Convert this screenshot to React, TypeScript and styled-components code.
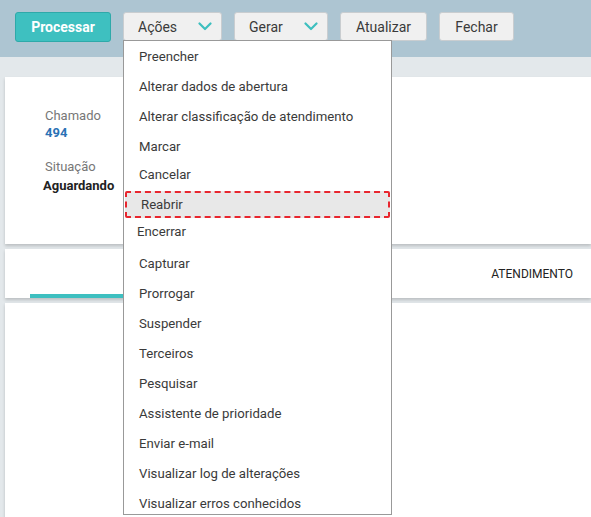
import React from 'react'
import styled, { createGlobalStyle } from 'styled-components'

const GlobalStyle = createGlobalStyle`
  html, body {
    margin: 0;
    padding: 0;
    background: #e3e8eb;
    font-family: Roboto, "Noto Sans", Arial, sans-serif;
    overflow: hidden;
  }
  * { box-sizing: border-box; }
`

type MenuItemT = {
  label: string
  h: number
  gap?: number
  active?: boolean
  indent?: number
  pb?: number
}

const menuItems: MenuItemT[] = [
  { label: 'Preencher', h: 30 },
  { label: 'Alterar dados de abertura', h: 30 },
  { label: 'Alterar classificação de atendimento', h: 30 },
  { label: 'Marcar', h: 30 },
  { label: 'Cancelar', h: 26 },
  { label: 'Reabrir', h: 27, gap: 4, active: true },
  { label: 'Encerrar', h: 30, indent: 12, pb: 4 },
  { label: 'Capturar', h: 30 },
  { label: 'Prorrogar', h: 30 },
  { label: 'Suspender', h: 30 },
  { label: 'Terceiros', h: 30 },
  { label: 'Pesquisar', h: 30 },
  { label: 'Assistente de prioridade', h: 30 },
  { label: 'Enviar e-mail', h: 30 },
  { label: 'Visualizar log de alterações', h: 30 },
  { label: 'Visualizar erros conhecidos', h: 30 },
]

const Chevron = () => (
  <svg width='14' height='9' viewBox='0 0 14 9' fill='none'>
    <path d='M1.5 1.5 L7 7 L12.5 1.5' stroke='#3dbfbf' strokeWidth='2.2' strokeLinecap='round' strokeLinejoin='round' />
  </svg>
)

const App: React.FC = () => {
  return (
    <>
      <GlobalStyle />
      <Page>
        <TopBar>
          <PrimaryButton>Processar</PrimaryButton>
          <MenuWrap>
            <SelectButton $w={99}>
              <span>Ações</span>
              <Chevron />
            </SelectButton>
            <Dropdown>
              {menuItems.map((item) => (
                <MenuItem
                  key={item.label}
                  $h={item.h}
                  $gap={item.gap ?? 0}
                  $active={!!item.active}
                  $indent={item.indent ?? 14}
                  $pb={item.pb ?? 0}
                >
                  {item.label}
                </MenuItem>
              ))}
            </Dropdown>
          </MenuWrap>
          <SelectButton $w={94}>
            <span>Gerar</span>
            <Chevron />
          </SelectButton>
          <PlainButton $w={87}>Atualizar</PlainButton>
          <PlainButton $w={75}>Fechar</PlainButton>
        </TopBar>

        <Content>
          <InfoCard>
            <Field>
              <FieldLabel>Chamado</FieldLabel>
              <FieldNumber>494</FieldNumber>
            </Field>
            <Field>
              <FieldLabel>Situação</FieldLabel>
              <FieldStatus>Aguardando</FieldStatus>
            </Field>
          </InfoCard>

          <TabsCard>
            <TabUnderline />
            <TabLabel>ATENDIMENTO</TabLabel>
          </TabsCard>

          <BodyCard />
        </Content>
      </Page>
    </>
  )
}

export default App

const Page = styled.div`
  width: 591px;
  height: 517px;
  overflow: hidden;
  background: #e3e8eb;
`

const TopBar = styled.div`
  height: 57px;
  background: #adc5d2;
  display: flex;
  align-items: flex-start;
  gap: 12px;
  padding: 12px 0 0 15px;
  position: relative;
  z-index: 2;
`

const PrimaryButton = styled.button`
  width: 96px;
  height: 30px;
  background: #3ec0c0;
  border: 1px solid #2ea9a9;
  border-radius: 3px;
  color: #fff;
  font-family: Roboto, Arial, sans-serif;
  font-weight: 700;
  font-size: 14px;
  padding: 0;
`

const MenuWrap = styled.div`
  position: relative;
`

const SelectButton = styled.button<{ $w: number }>`
  width: ${(p) => p.$w}px;
  height: 29px;
  background: #f0f0f0;
  border: 1px solid #c9cdd0;
  border-radius: 3px;
  color: #3a3a3a;
  font-family: Roboto, Arial, sans-serif;
  font-size: 14px;
  display: flex;
  align-items: center;
  justify-content: space-between;
  padding: 0 9px 0 14px;
`

const PlainButton = styled.button<{ $w: number }>`
  width: ${(p) => p.$w}px;
  height: 29px;
  background: #f0f0f0;
  border: 1px solid #c9cdd0;
  border-radius: 3px;
  color: #3a3a3a;
  font-family: Roboto, Arial, sans-serif;
  font-size: 14px;
  padding: 0;
`

const Dropdown = styled.div`
  position: absolute;
  top: 28px;
  left: 0;
  width: 269px;
  height: 475px;
  background: #fff;
  border: 1px solid #999;
  overflow: hidden;
  padding: 0 1px;
`

const MenuItem = styled.div<{ $h: number; $gap: number; $active: boolean; $indent: number; $pb: number }>`
  height: ${(p) => p.$h}px;
  margin-top: ${(p) => p.$gap}px;
  display: flex;
  align-items: center;
  padding-left: ${(p) => (p.$active ? p.$indent : p.$indent)}px;
  padding-bottom: ${(p) => p.$pb}px;
  font-size: 13.2px;
  color: #3a3a3a;
  white-space: nowrap;
  background: ${(p) => (p.$active ? '#e8e8e8' : 'transparent')};
  border: ${(p) => (p.$active ? '2px dashed #e8262e' : 'none')};
  border-radius: ${(p) => (p.$active ? '2px' : '0')};
`

const Content = styled.div`
  padding: 20px 0 0 5px;
  display: flex;
  flex-direction: column;
  gap: 5px;
`

const Card = styled.div`
  background: #fff;
  box-shadow: 0 2px 3px rgba(0, 0, 0, 0.18);
`

const InfoCard = styled(Card)`
  height: 167px;
  padding: 31px 0 0 38px;
  display: flex;
  flex-direction: column;
  gap: 18px;
`

const Field = styled.div`
  display: flex;
  flex-direction: column;
  gap: 1px;
`

const FieldLabel = styled.span`
  font-size: 13px;
  color: #777;
  padding-left: 2px;
  line-height: 16px;
`

const FieldNumber = styled.span`
  font-size: 13px;
  font-weight: 700;
  color: #2a72b5;
  padding-left: 2px;
  line-height: 16px;
`

const FieldStatus = styled.span`
  font-size: 13px;
  font-weight: 700;
  color: #222;
  line-height: 20px;
`

const TabsCard = styled(Card)`
  height: 49px;
  display: flex;
  align-items: flex-end;
  justify-content: space-between;
  padding: 0 18px 0 25px;
`

const TabUnderline = styled.div`
  width: 180px;
  height: 4px;
  background: #3dbfc0;
`

const TabLabel = styled.span`
  align-self: center;
  font-size: 12px;
  color: #222;
  letter-spacing: 0;
`

const BodyCard = styled(Card)`
  height: 220px;
`
